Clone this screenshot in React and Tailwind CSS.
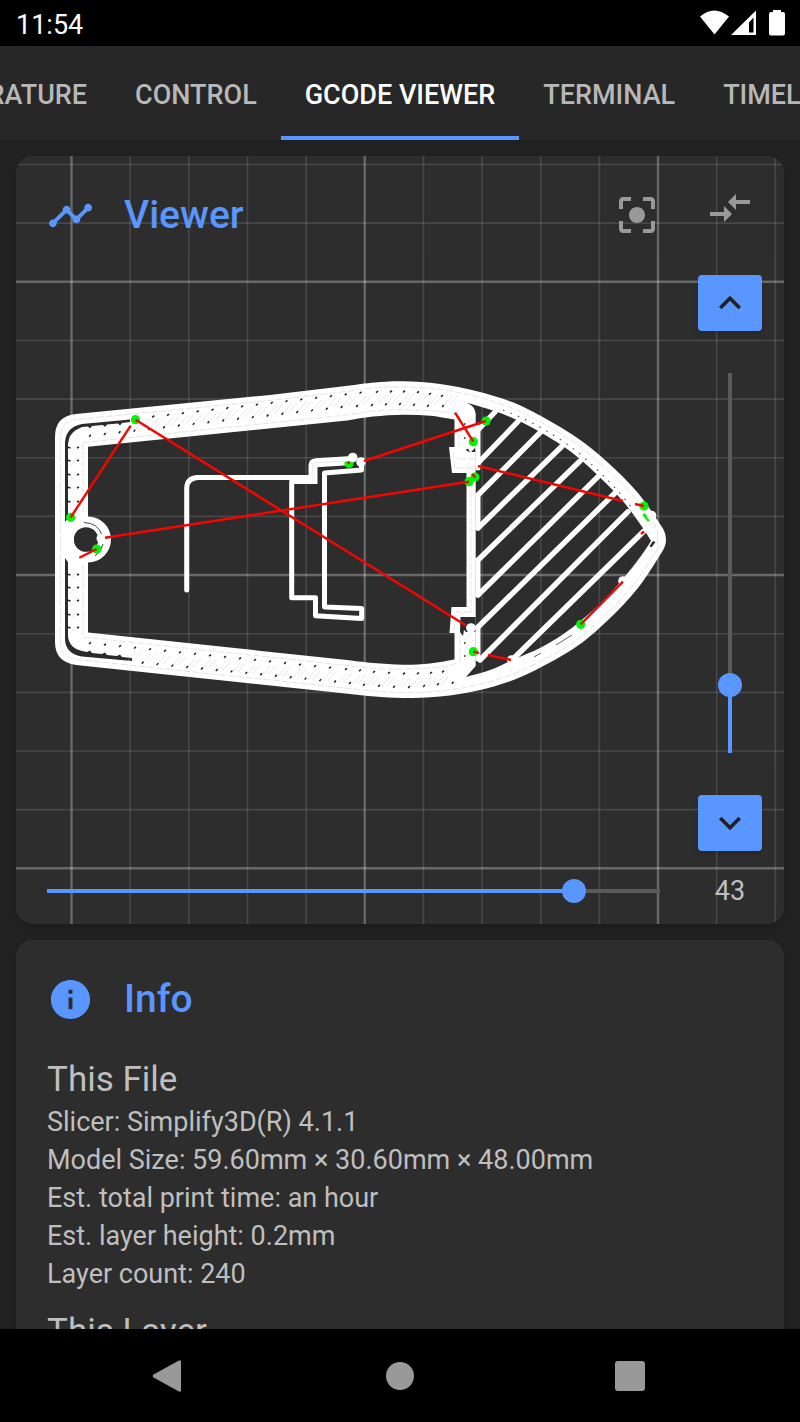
import { useState } from "react";
import {
  MdTimeline,
  MdInfo,
  MdCenterFocusStrong,
  MdCompareArrows,
  MdKeyboardArrowUp,
  MdKeyboardArrowDown,
} from "react-icons/md";

const CELL = 58.65;
const gridLines = Array.from({ length: 13 }, (_, i) => i);

// Catmull-Rom curve through the points, continuing from the first one.
const curve = (pts) =>
  pts
    .slice(1)
    .map((p, i) => {
      const a = pts[Math.max(0, i - 1)];
      const b = pts[i];
      const d = pts[Math.min(pts.length - 1, i + 2)];
      return `C${b[0] + (p[0] - a[0]) / 6} ${b[1] + (p[1] - a[1]) / 6} ${p[0] - (d[0] - b[0]) / 6} ${p[1] - (d[1] - b[1]) / 6} ${p[0]} ${p[1]}`;
    })
    .join("");

const run = (x, y, slope, count, step = 14.8) =>
  Array.from({ length: count }, (_, i) => [x + i * step, y + i * step * slope]);

// Ends of the infill strokes along both sides of the hull.
const topOuter = [
  ...run(153.3, 416.7, -0.115, 15),
  [377, 392], [391, 391.7], [404, 391.7], [418, 392.3], [430, 394], [442, 396],
];
const topInner = [
  ...run(90, 435.7, -0.114, 18),
  [357, 406], [372, 405], [386, 404.3], [400, 404], [414, 404.7], [428, 405.7], [443, 406],
];
const bottomInner = [
  ...run(90, 643.3, 0.102, 17, 15),
  [346, 669.3], [360, 670.5], [374, 672], [389, 673], [404, 673.7], [418, 673.5], [431, 673], [443, 671.7],
];
const bottomOuter = [
  ...run(142.7, 662.7, 0.098, 15, 14.8),
  [364, 684.7], [379, 685.7], [394, 686.7], [409, 687], [424, 686], [438, 684.3], [452.7, 682.7],
];
const leftTicks = [447, 460, 474, 487, 501, 574, 587, 600, 614, 627];

const hatch = [
  [476, 432, 495, 412], [478, 463, 518, 421.5], [478, 495, 540, 432.7],
  [478, 528, 561.7, 446.5], [478, 560, 580, 461], [478, 595, 598, 476.7],
  [478, 627, 615, 493], [480, 660, 628, 511.7], [512, 660, 644, 531],
];

const travels = [
  [70.7, 517.3, 130.7, 425.7], [135.5, 419.7, 466, 625.5], [105, 537.7, 469, 481.7],
  [79.3, 557.7, 96.7, 549], [364, 461, 486, 421], [455, 412.7, 473.3, 441.7],
  [478, 466, 623, 501], [635, 504, 644, 506], [623, 581.7, 580.7, 624.3],
  [488, 655, 511, 660], [473.3, 651.7, 479, 653], [641, 534, 644, 531.5],
];

const starts = [
  [70.7, 517.3], [135.5, 419.7], [96.7, 549], [349, 463.5], [486, 421],
  [473.3, 441.7], [475, 477], [469, 481.7], [644, 506], [580.7, 624.3], [473.3, 651.7],
];

const rim = [
  [350, 385.5], [375, 382.5], [403, 381.3], [440, 384], [480, 392], [523, 406.7], [573, 435],
  [607, 461.7], [638, 493], [662, 527],
];
const lowerRim = [
  [662, 552], [638, 588], [607, 621], [573, 649], [523, 676], [480, 690], [440, 696.5],
  [403, 698], [375, 696.5], [350, 694],
];
const innerRim = [
  [466.7, 402.7], [493, 410.5], [517, 420], [540, 432], [562, 445.5], [580, 459], [598, 475.5],
  [616, 493.5], [630, 510], [645, 531],
];
const innerLowerRim = [
  [651, 541], [641, 556], [622, 580], [605, 599], [583, 619], [562, 635], [540, 648], [517, 658], [490, 670], [466, 677],
];

const HULL =
  `M55 437Q55 416 76 414L270 395L350 385.5${curve(rim)}Q670 539.500 662 552${curve(lowerRim)}L76 665Q55 662 55 642Z` +
  `M88 446.700L347 420.500${curve([[347, 420.5], [373, 416.5], [403, 414.7], [430, 415.7], [454.5, 419.5]])}V447H449L452 473H466.500V607H451.500L449.500 633H454.500V659.500` +
  `${curve([[454.5, 659.5], [430, 663.5], [403, 664.7], [373, 663], [347, 660]])}L88 632.500V562.500A23 23 0 0 0 88 516.500Z` +
  "M98.5 539.5A12.3 12.3 0 1 0 74 539.5A12.3 12.3 0 1 0 98.5 539.5Z" +
  `M466.700 402.700${curve(innerRim)}L651 541${curve(innerLowerRim)}L475.700 666V414Q475.500 406 466.700 402.700Z`;

const RIM_HAIRLINE = `M60.500 642V437Q60.500 421 76 419.500L270 400.500L350 391${curve(
  [[350, 391], [375, 388], [403, 386.8], [440, 389.5], [478, 397], [520.5, 411.7], [570, 439.5], [603, 466], [634, 497], [657.5, 530]],
)}V549${curve(
  [[657.5, 549], [634, 584], [603, 617], [570, 644.5], [520.5, 671], [478, 684.7], [440, 691], [403, 692.5], [375, 691], [350, 688.5]],
)}L76 659.500Q60.500 657 60.500 642`;

function Toolpath() {
  return (
    <svg
      className="absolute inset-0 size-full"
      viewBox="16 156 768 768"
      preserveAspectRatio="xMidYMid slice"
      role="img"
      aria-label="Toolpath of the current layer"
    >
      <g stroke="#ffffff">
        {gridLines.map((i) => {
          const x = 71.5 + i * CELL;
          const y = 164.5 + i * CELL;
          const majorX = i % 5 === 0;
          const majorY = i % 5 === 2;
          return (
            <g key={i}>
              <path d={`M${x} 156V924`} strokeWidth={majorX ? 2.4 : 1.6} opacity={majorX ? 0.28 : 0.12} />
              <path d={`M16 ${y}H784`} strokeWidth={majorY ? 2.4 : 1.6} opacity={majorY ? 0.28 : 0.12} />
            </g>
          );
        })}
      </g>

      <path d={HULL} fill="#fff" fillRule="evenodd" />
      <circle cx="86" cy="539.5" r="17.5" fill="none" stroke="#fff" strokeWidth="10.4" />

      {/* gaps between the outer wall and the infill */}
      <g fill="#2b2b2b">
        <path d="M130 419.500L82 424Q66 427 65 442V522L68 518V444Q69 434 76 430L82 427L88 426.500L90 428.500L92 426L103 425L105 427L107 424.500L118 423.500L120 425.500L122 423L130 422Z" />
        <path d="M65 558V640Q66 654 82 656.500L132 661V658L122 657L120 654.500L117 656L107 655L105 652.500L102 654L92 653L90 650.500L87 652L82 651Q69 648 68 636V562Z" />
        <path d="M460.500 617H475.700V632H466L464 630L463 636L460 632Z" />
        <path d="M653 541L655.500 542L651.500 547.500L649.500 546Z" />
        <path d="M465.500 450L468 448.500L470 452.500ZM471 452L475.500 447.500V452Z" />
      </g>
      <path d="M84 522.500Q98 523 102 535M95 556Q101 552 103 544" fill="none" stroke="#444" strokeWidth="1" />

      {/* hairlines between neighbouring passes */}
      <g fill="none" stroke="#d9d9d9" strokeWidth="0.700" strokeDasharray="7 2">
        <path d={RIM_HAIRLINE} />
        <path d="M83 442.500L347 415L373 411Q403 408 447 412L459 415V445M83 442.500V514M83 565V637L347 665.500L373 668.500Q403 670.500 447 666.500L460 662V634" />
        <path d="M471 473V612M453 452L455 468H473M475 459H456M471 612H456L454 630" />
      </g>
      <path d="M503 410Q545 426 580 454Q612 482 632 508" fill="none" stroke="#555" strokeWidth="1.200" strokeDasharray="1.500 6.500" />
      <path d="M556 645L572 635M534 657L541 653M630 570L637 561" fill="none" stroke="#666" strokeWidth="1" />

      <g stroke="#c4c4c4" strokeWidth="0.600" strokeDasharray="2 1">
        {topInner.slice(3).map(([x, y], i) => (
          <path key={i} d={`M${x + 2} ${y - 2}l8 -9M${x + 7} ${y - 2}l8 -9`} />
        ))}
        {bottomInner.slice(3).map(([x, y], i) => (
          <path key={i} d={`M${x - 7} ${y + 13}l8 -9M${x - 2} ${y + 13}l8 -9`} />
        ))}
        {leftTicks.map((y) => (
          <path key={y} d={`M70 ${y + 6}l8 -9`} />
        ))}
        <path d="M465 427l7 -8M465 433l7 -7M465 640l8 -8M464 650l9 -10M464 660l9 -10" />
      </g>
      <g stroke="#222" strokeWidth="1.500">
        {[...topOuter, ...bottomInner].map(([x, y], i) => (
          <path key={i} d={`M${x - 1} ${y + 0.6}l2 -1.600`} />
        ))}
        {[...topInner, ...bottomOuter].map(([x, y], i) => (
          <path key={i} d={`M${x - 0.8} ${y + 1}l1.600 -2`} />
        ))}
        {leftTicks.map((y) => (
          <path key={y} d={`M67 ${y}l3.500 1M77 ${y + 1}l2 -1`} />
        ))}
        <path d="M464 438h1.500M464 424h1.500M464 643h1.500M464 656h1.500" />
      </g>

      <g stroke="#fff" strokeLinecap="round" fill="none">
        {hatch.map(([x1, y1, x2, y2]) => (
          <path key={x2} d={`M${x1} ${y1}L${x2} ${y2}`} strokeWidth="5.400" />
        ))}
        <path d="M478 427V468M478 495V528M478 562V595M478 628V659" strokeWidth="5" />
        <path d="M186.700 590V488Q187 478 198 477.500H312" strokeWidth="5" />
        <path d="M315 481.500H291.700V597.700H315.500V615.700L361.700 618.500V608.500L324.500 607V473L361.500 470V463" strokeWidth="5" strokeLinecap="butt" strokeLinejoin="round" />
        <path d="M313 484V465.500Q313 463 316 462.800L352 460.500" strokeWidth="9" strokeLinecap="butt" />
      </g>
      <path d="M313 480V463L345 461" fill="none" stroke="#dcdcdc" strokeWidth="0.700" />

      {starts.map(([x, y]) => (
        <circle key={x} cx={x} cy={y} r="4.600" fill="#00f500" />
      ))}
      <path d="M643.500 514L649 521" stroke="#00f500" strokeWidth="3" />
      <g fill="#fff">
        <circle cx="352.700" cy="457.500" r="4.800" />
        <circle cx="361" cy="462" r="4.800" />
        <path d="M344 457H354V461L344 461.500Z" />
        <circle cx="651.500" cy="515.500" r="4.800" />
        <circle cx="623" cy="581" r="4.800" />
        <circle cx="511.700" cy="660" r="4.800" />
        <circle cx="470.900" cy="628" r="4.800" />
        <circle cx="101" cy="538.500" r="4.500" />
      </g>
      <g stroke="#f60400" strokeWidth="2.400">
        {travels.map(([x1, y1, x2, y2]) => (
          <path key={`${x1}-${y1}`} d={`M${x1} ${y1}L${x2} ${y2}`} />
        ))}
        <path d="M472.500 474L475 477.500M347.500 462.500L350 463" />
      </g>
    </svg>
  );
}

const thumb =
  "m-0 cursor-pointer appearance-none bg-transparent [&::-webkit-slider-thumb]:size-6 [&::-webkit-slider-thumb]:appearance-none [&::-webkit-slider-thumb]:rounded-full [&::-webkit-slider-thumb]:bg-[#5996ff]";

function Tab({ children, active = false }) {
  return (
    <button
      type="button"
      role="tab"
      aria-selected={active}
      className={
        active
          ? "shrink-0 border-t-8 border-b-4 border-t-transparent border-b-[#5996ff] px-6 font-medium whitespace-nowrap text-white"
          : "shrink-0 border-t-8 border-b-4 border-transparent px-6 font-medium whitespace-nowrap text-[#b8b8b8]"
      }
    >
      {children}
    </button>
  );
}

export default function App() {
  const [layer, setLayer] = useState(43);
  const [progress, setProgress] = useState(86);

  return (
    <div className="flex h-screen flex-col overflow-hidden bg-[#212121] font-[Roboto,sans-serif] text-[27px] text-[#bfbfbf]">
      <header className="flex h-[46px] shrink-0 items-center justify-between bg-black pr-[15px] pl-4 text-white">
        <span className="pt-1">11:54</span>
        <svg className="h-[26px] w-[86px]" viewBox="699 10 86 26" fill="#fff" aria-label="Wi-Fi, mobile signal and battery">
          <path d="M700 16.500Q714 4.500 729 16.500L714.500 34.500Z" />
          <path fillRule="evenodd" d="M756 10.500V35H731ZM753.500 17.500L749 22.500V32.500H753.500Z" />
          <path d="M773 10h8v2h2q2 0 2 2v19.500q0 2-2 2h-12q-2 0-2-2V14q0-2 2-2h2Z" />
        </svg>
      </header>

      <div role="tablist" className="grid h-[94px] shrink-0 grid-cols-[minmax(0,1fr)_auto_minmax(0,1fr)] bg-[#272727]">
        <div className="flex justify-end overflow-hidden">
          <Tab>TEMPERATURE</Tab>
          <Tab>CONTROL</Tab>
        </div>
        <Tab active>GCODE VIEWER</Tab>
        <div className="flex overflow-hidden">
          <Tab>TERMINAL</Tab>
          <Tab>TIMELAPSE</Tab>
        </div>
      </div>

      <main className="flex min-h-0 flex-1 flex-col gap-4 overflow-hidden p-4">
        <section className="relative flex aspect-square w-full shrink-0 overflow-hidden rounded-2xl bg-[#2d2d2d] pr-[22px] pl-[31px] shadow-md">
          <Toolpath />

          <div className="relative flex flex-1 flex-col justify-between pt-[33px] pb-[21px]">
            <div className="flex items-center pr-[37px]">
              <MdTimeline className="size-[47px] text-[#5996ff]" />
              <h2 className="ml-[30px] flex-1 text-[39px] leading-[52px] font-medium text-[#5996ff]">Viewer</h2>
              <button type="button" aria-label="Center view" className="text-[#999]">
                <MdCenterFocusStrong className="size-12" />
              </button>
            </div>
            <div className="mr-[38px] flex h-6 items-center">
              <div className="relative h-1 w-full bg-[#5a5a5a]">
                <div className="h-full bg-[#5996ff]" style={{ width: `${progress}%` }} />
                <input
                  type="range"
                  aria-label="Layer progress"
                  min="0"
                  max="100"
                  value={progress}
                  onChange={(e) => setProgress(Number(e.target.value))}
                  className={`absolute -top-[10px] -left-3 h-6 w-[calc(100%+24px)] ${thumb}`}
                />
              </div>
            </div>
          </div>

          <div className="relative flex w-16 flex-col items-center pt-7 pb-[14px]">
            <button type="button" aria-label="Collapse" className="text-[#999]">
              <MdCompareArrows className="size-12" />
            </button>
            <button
              type="button"
              aria-label="Next layer"
              onClick={() => setLayer(Math.min(240, layer + 1))}
              className="mt-[43px] flex h-14 w-full shrink-0 items-center justify-center rounded-sm bg-[#5996ff] text-[#212121] shadow-md"
            >
              <MdKeyboardArrowUp className="size-11" />
            </button>
            <div className="relative my-[42px] flex w-1 flex-1 flex-col justify-end bg-[#5a5a5a]">
              <div className="bg-[#5996ff]" style={{ height: `${(layer / 240) * 100}%` }} />
              <input
                type="range"
                aria-label="Layer"
                min="0"
                max="240"
                value={layer}
                onChange={(e) => setLayer(Number(e.target.value))}
                className={`absolute -top-3 -left-[10px] h-[calc(100%+24px)] w-6 [direction:rtl] [writing-mode:vertical-lr] ${thumb}`}
              />
            </div>
            <button
              type="button"
              aria-label="Previous layer"
              onClick={() => setLayer(Math.max(0, layer - 1))}
              className="flex h-14 w-full shrink-0 items-center justify-center rounded-sm bg-[#5996ff] text-[#212121] shadow-md"
            >
              <MdKeyboardArrowDown className="size-11" />
            </button>
            <output className="mt-[21px] leading-[38px]">{layer}</output>
          </div>
        </section>

        <section className="shrink-0 rounded-2xl bg-[#2d2d2d] px-[31px] pt-[33px] shadow-md">
          <div className="flex items-center gap-[30px]">
            <MdInfo className="size-[47px] text-[#5996ff]" />
            <h2 className="text-[39px] leading-[52px] font-medium text-[#5996ff]">Info</h2>
          </div>
          <h3 className="mt-8 text-[35px] leading-[46px]">This File</h3>
          <div className="leading-[38px]">
            <p>Slicer: Simplify3D(R) 4.1.1</p>
            <p>Model Size: 59.60mm × 30.60mm × 48.00mm</p>
            <p>Est. total print time: an hour</p>
            <p>Est. layer height: 0.2mm</p>
            <p>Layer count: 240</p>
          </div>
          <h3 className="mt-4 text-[35px] leading-[46px]">This Layer</h3>
        </section>
      </main>

      <nav aria-label="System navigation" className="grid h-[93px] shrink-0 grid-cols-[1fr_auto_1fr] items-center bg-black px-[152px] text-[#999]">
        <button type="button" aria-label="Back" className="size-8 justify-self-start">
          <svg className="size-8" viewBox="0 0 32 32" fill="currentColor">
            <path d="M27 0.500Q29 -0.500 29 2V30Q29 32.500 27 31.500L1.500 17.500Q0 16 1.500 14.500Z" />
          </svg>
        </button>
        <button type="button" aria-label="Home" className="size-7 rounded-full bg-[#999]" />
        <button type="button" aria-label="Recent apps" className="mr-[3px] size-[30px] justify-self-end rounded-[3px] bg-[#999]" />
      </nav>
    </div>
  );
}
